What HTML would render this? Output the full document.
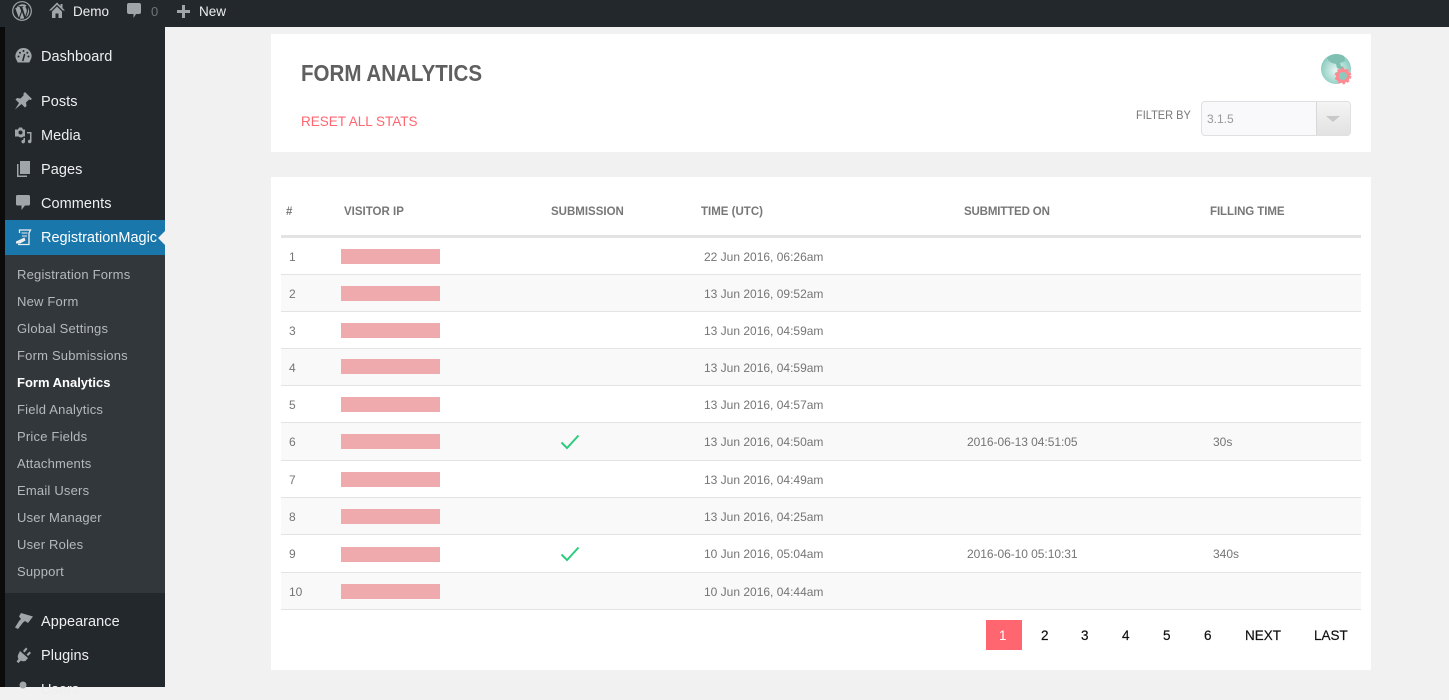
<!DOCTYPE html>
<html><head><meta charset="utf-8"><style>
*{box-sizing:border-box}
html,body{margin:0;padding:0;width:1449px;height:687px;overflow:hidden;background:#f1f1f1;font-family:"Liberation Sans",sans-serif}
.a{position:absolute;white-space:nowrap}
#strip{left:0;top:0;width:5px;height:687px;background:#0b0b0b}
#bar{left:0;top:0;width:1449px;height:27px;background:#23282d}
#side{left:5px;top:27px;width:160px;height:660px;background:#23282d}
#sub{left:5px;top:255px;width:160px;height:338px;background:#32373c}
#act{left:5px;top:220px;width:160px;height:35px;background:#1a77ab}
.m{left:41px;font-size:14.5px;line-height:20px;color:#eee;letter-spacing:.05px}
.s{left:17px;font-size:13px;line-height:18px;color:#b4b9be;letter-spacing:.2px}
.card{background:#fff}
.line{left:281px;width:1080px;height:1px;background:#e3e3e3}
.alt{left:281px;width:1080px;background:#f9f9fa}
.red{left:341px;width:99px;height:15px;background:#eeaaac}
.th{font-size:11.5px;font-weight:bold;color:#777;line-height:14px;top:205px}
.td{font-size:12px;color:#757575;line-height:14px}
.pg{font-size:13.5px;color:#111;line-height:16px;top:627px;margin-top:1px;-webkit-text-stroke:.2px #111}
svg{position:absolute;overflow:visible}
</style></head><body>
<div class="a" id="strip"></div>
<div class="a" id="bar"></div>
<div class="a" id="side"></div>
<div class="a" id="sub"></div>
<div class="a" id="act"></div>
<svg style="left:12px;top:1px" width="20" height="20" viewBox="0 0 20 20"><circle cx="10" cy="10" r="9.3" fill="none" stroke="#a0a5aa" stroke-width="1.200"/><path d="M3.200 7l3.600 9.800L9.200 10 7.600 6H6.400V5.200h5V6h-1.100l3 9.400 1.400-4.900c.5-1.800-.5-3-1-3.800-.4-.8-.2-2 .9-2.200-3-2.200-8-1.500-10.400 2.700zM10 11l-2.200 6.500a7.500 7.500 0 0 0 4.500-.1zM16 6.500c.6 2.700-.3 5-1.900 9.700 3-2 4-6.200 1.900-9.700z" fill="#a0a5aa"/></svg>
<svg style="left:49px;top:2px" width="16" height="16" viewBox="0 0 16 16"><path d="M8 .5L0 8.500h2.200l5.800-5.800 5.800 5.800H16L13.500 6V2h-2v2z" fill="#a0a5aa"/><path d="M3 9.500L8 4.500l5 5V16H9.500v-4.500h-3V16H3z" fill="#a0a5aa"/></svg>
<div class="a" style="left:73px;top:3px;font-size:13.500px;line-height:17px;color:#eee">Demo</div>
<svg style="left:127px;top:3px" width="15" height="16" viewBox="0 0 15 16"><path d="M2 0h10a2 2 0 0 1 2 2v7a2 2 0 0 1-2 2H9l-2.500 4v-4H2a2 2 0 0 1-2-2V2a2 2 0 0 1 2-2z" fill="#a0a5aa"/></svg>
<div class="a" style="left:151px;top:3px;font-size:13px;line-height:17px;color:#70757a">0</div>
<svg style="left:177px;top:5px" width="13" height="13" viewBox="0 0 13 13"><path d="M5 0h3v5h5v3H8v5H5V8H0V5h5z" fill="#a0a5aa"/></svg>
<div class="a" style="left:199px;top:3px;font-size:13.500px;line-height:17px;color:#eee">New</div>

<svg style="left:15px;top:48px" width="17" height="16" viewBox="0 0 17 16"><path d="M8.500 0a8 8 0 0 0-7 12l1.200 2.500h11.600l1.200-2.500a8 8 0 0 0-7-12z" fill="#a0a5aa"/><path d="M7.700 13l2-7" stroke="#23282d" stroke-width="1.500" fill="none"/><circle cx="3.500" cy="8.500" r="1" fill="#23282d"/><circle cx="5" cy="4.700" r="1" fill="#23282d"/><circle cx="8.500" cy="3" r="1" fill="#23282d"/><circle cx="12.300" cy="4.700" r="1" fill="#23282d"/><circle cx="13.500" cy="8.500" r="1" fill="#23282d"/></svg>
<div class="a m" style="top:46px;margin-top:1px">Dashboard</div>
<svg style="left:14px;top:92px" width="18" height="18" viewBox="0 0 18 18"><path d="M11 0l7 7-1.500 1-1.500-.5-3 3 .5 3.500-1.500 1.500-3.500-3.500L1 17.500l4-6.500-3.500-3.500L3 6l3.500.5 3-3L9.500 1.500z" fill="#a0a5aa"/></svg>
<div class="a m" style="top:92px">Posts</div>
<svg style="left:14px;top:127px" width="18" height="17" viewBox="0 0 18 17"><path d="M1 2.500h3l1-2h3l1 2h2v7H9.500a3.500 3.500 0 0 1-5 0H1z" fill="#a0a5aa"/><circle cx="6.500" cy="5.500" r="2" fill="#23282d"/><path d="M13 5h4.500v9.500a1.800 1.800 0 1 1-1.500-1.800V6.500h-3zM9.500 11h1.500v3.500a1.800 1.800 0 1 1-1.500-1.700z" fill="#a0a5aa"/></svg>
<div class="a m" style="top:126px">Media</div>
<svg style="left:16px;top:161px" width="14" height="16" viewBox="0 0 14 16"><path d="M4 0h10v13H4z" fill="#a0a5aa"/><path d="M2.500 3v11.500H11V16H1V3z" fill="#a0a5aa"/></svg>
<div class="a m" style="top:160px">Pages</div>
<svg style="left:16px;top:195px" width="14" height="16" viewBox="0 0 14 16"><path d="M1.500 0h11A1.500 1.500 0 0 1 14 1.500V9a1.500 1.500 0 0 1-1.500 1.500H9L5.500 15v-4.500h-4A1.500 1.500 0 0 1 0 9V1.500A1.500 1.500 0 0 1 1.500 0z" fill="#a0a5aa"/></svg>
<div class="a m" style="top:194px">Comments</div>
<svg style="left:15px;top:229px" width="17" height="17" viewBox="0 0 17 17"><path d="M4.500 4V1h11l-1.500 3v11.500H3" fill="none" stroke="#eee" stroke-width="1.300"/><path d="M6.500 4h6M7 7h5" stroke="#eee" stroke-width="1"/><path d="M1 12.500l8.500-4 1 3L5 14.500H1z" fill="#eee"/></svg>
<div class="a m" style="top:228px;color:#fff;letter-spacing:0">RegistrationMagic</div>
<div class="a" style="left:158px;top:231px;width:0;height:0;border:7px solid transparent;border-left:0;border-right-color:#f1f1f1"></div>

<div class="a s" style="top:266px">Registration Forms</div>
<div class="a s" style="top:293px">New Form</div>
<div class="a s" style="top:320px">Global Settings</div>
<div class="a s" style="top:347px">Form Submissions</div>
<div class="a s" style="top:374px;color:#fff;font-weight:bold;letter-spacing:0">Form Analytics</div>
<div class="a s" style="top:401px">Field Analytics</div>
<div class="a s" style="top:428px">Price Fields</div>
<div class="a s" style="top:455px">Attachments</div>
<div class="a s" style="top:482px">Email Users</div>
<div class="a s" style="top:509px">User Manager</div>
<div class="a s" style="top:536px">User Roles</div>
<div class="a s" style="top:563px">Support</div>

<svg style="left:14px;top:612px" width="19" height="18" viewBox="0 0 19 18"><path d="M7 1l12 3.500-5 6.500-3-2-2 1.500-5 6.500-3-1.500L5 9 7 7 5 4.500z" fill="#a0a5aa"/></svg>
<div class="a m" style="top:612px">Appearance</div>
<svg style="left:15px;top:646px" width="17" height="18" viewBox="0 0 17 18"><path d="M5 5l8 7-2 2.500c-1.500 1-3.500 1-5 0L3.500 17 1.500 15.500 3.500 13c-1-1.500-1-3.500 0-5zM8 5l3-3.500 1.500 1.500-3 3.500zM11.500 8.500l3-3 1.500 1.500-3 3z" fill="#a0a5aa"/></svg>
<div class="a m" style="top:646px">Plugins</div>
<svg style="left:17px;top:681px" width="12" height="12" viewBox="0 0 12 12"><circle cx="6" cy="4" r="3.500" fill="#a0a5aa"/></svg>
<div class="a m" style="top:680px">Users</div>

<div class="a card" style="left:271px;top:34px;width:1100px;height:118px"></div>
<div class="a" style="left:301px;top:59px;font-size:23px;line-height:28px;font-weight:bold;color:#5f5f5f;transform:scaleX(.893);transform-origin:0 0">FORM ANALYTICS</div>
<div class="a" style="left:301px;top:113px;font-size:13.500px;line-height:18px;color:#ff6670">RESET ALL STATS</div>
<svg style="left:1320px;top:53px" width="33" height="33" viewBox="0 0 33 33"><defs><radialGradient id="g" cx=".5" cy=".55" r=".55"><stop offset="0" stop-color="#eaf7f4"/><stop offset="1" stop-color="#86cabd"/></radialGradient></defs><circle cx="16" cy="16" r="15" fill="url(#g)"/><path d="M7 5c4-4 12-5 17-2l1 5-5 2 1 3 3 1-2 3-5-2-1-4-4-1-3-2z" fill="#7fbfb2"/><path d="M16 19l3 1 1 5-3 4-1-4z" fill="#8fcabe"/><circle cx="23" cy="23" r="5.500" fill="#8cc9bd" stroke="#ff8a92" stroke-width="3"/><circle cx="23" cy="23" r="7.600" fill="none" stroke="#ff8a92" stroke-width="1.500" stroke-dasharray="2.500 2.400"/></svg>
<div class="a" style="left:1136px;top:108px;font-size:12px;line-height:14px;color:#777;transform:scaleX(.917);transform-origin:0 0">FILTER BY</div>
<div class="a" style="left:1201px;top:101px;width:150px;height:35px;background:#f9f9fb;border:1px solid #e0e0e0;border-radius:4px"></div>
<div class="a" style="left:1316px;top:102px;width:34px;height:33px;background:linear-gradient(#f4f4f4,#e2e2e2);border-left:1px solid #d8d8d8;border-radius:0 3px 3px 0"></div>
<div class="a" style="left:1326px;top:116px;width:0;height:0;border:7px solid transparent;border-bottom:0;border-top:6px solid #c8c8c8"></div>
<div class="a" style="left:1207px;top:112px;font-size:12px;line-height:14px;color:#999">3.1.5</div>

<div class="a card" style="left:271px;top:177px;width:1100px;height:493px"></div>
<div class="a th" style="left:286px">#</div>
<div class="a th" style="left:344px">VISITOR IP</div>
<div class="a th" style="left:551px">SUBMISSION</div>
<div class="a th" style="left:701px">TIME (UTC)</div>
<div class="a th" style="left:964px;letter-spacing:-.15px">SUBMITTED ON</div>
<div class="a th" style="left:1210px;letter-spacing:-.08px">FILLING TIME</div>
<div class="a" style="left:281px;top:235px;width:1080px;height:3px;background:#e3e3e3"></div>

<div class="a alt" style="top:275px;height:36px"></div>
<div class="a alt" style="top:349px;height:36px"></div>
<div class="a alt" style="top:423px;height:37px"></div>
<div class="a alt" style="top:498px;height:36px"></div>
<div class="a alt" style="top:573px;height:36px"></div>
<div class="a line" style="top:274px"></div>
<div class="a line" style="top:311px"></div>
<div class="a line" style="top:348px"></div>
<div class="a line" style="top:385px"></div>
<div class="a line" style="top:422px"></div>
<div class="a line" style="top:460px"></div>
<div class="a line" style="top:497px"></div>
<div class="a line" style="top:534px"></div>
<div class="a line" style="top:572px"></div>
<div class="a line" style="top:609px"></div>

<div class="a red" style="top:249px"></div>
<div class="a red" style="top:286px"></div>
<div class="a red" style="top:323px"></div>
<div class="a red" style="top:359px"></div>
<div class="a red" style="top:397px"></div>
<div class="a red" style="top:434px"></div>
<div class="a red" style="top:472px"></div>
<div class="a red" style="top:509px"></div>
<div class="a red" style="top:547px"></div>
<div class="a red" style="top:584px"></div>

<div class="a td" style="left:289px;top:250px">1</div><div class="a td" style="left:704px;top:250px">22 Jun 2016, 06:26am</div>
<div class="a td" style="left:289px;top:287px">2</div><div class="a td" style="left:704px;top:287px">13 Jun 2016, 09:52am</div>
<div class="a td" style="left:289px;top:324px">3</div><div class="a td" style="left:704px;top:324px">13 Jun 2016, 04:59am</div>
<div class="a td" style="left:289px;top:361px">4</div><div class="a td" style="left:704px;top:361px">13 Jun 2016, 04:59am</div>
<div class="a td" style="left:289px;top:398px">5</div><div class="a td" style="left:704px;top:398px">13 Jun 2016, 04:57am</div>
<div class="a td" style="left:289px;top:435px">6</div><div class="a td" style="left:704px;top:435px">13 Jun 2016, 04:50am</div>
<div class="a td" style="left:967px;top:435px;letter-spacing:-.05px">2016-06-13 04:51:05</div><div class="a td" style="left:1213px;top:435px">30s</div>
<div class="a td" style="left:289px;top:473px">7</div><div class="a td" style="left:704px;top:473px">13 Jun 2016, 04:49am</div>
<div class="a td" style="left:289px;top:510px">8</div><div class="a td" style="left:704px;top:510px">13 Jun 2016, 04:25am</div>
<div class="a td" style="left:289px;top:547px">9</div><div class="a td" style="left:704px;top:547px">10 Jun 2016, 05:04am</div>
<div class="a td" style="left:967px;top:547px;letter-spacing:-.05px">2016-06-10 05:10:31</div><div class="a td" style="left:1213px;top:547px">340s</div>
<div class="a td" style="left:289px;top:585px">10</div><div class="a td" style="left:704px;top:585px">10 Jun 2016, 04:44am</div>

<svg style="left:560px;top:434px" width="20" height="16" viewBox="0 0 20 16"><path d="M1.500 8.500l5.500 5.500L18.500 1.500" fill="none" stroke="#2ecc80" stroke-width="2"/></svg>
<svg style="left:560px;top:546px" width="20" height="16" viewBox="0 0 20 16"><path d="M1.500 8.500l5.500 5.500L18.500 1.500" fill="none" stroke="#2ecc80" stroke-width="2"/></svg>

<div class="a" style="left:986px;top:620px;width:36px;height:30px;background:#ff6670"></div>
<div class="a pg" style="left:999px;color:#fff;-webkit-text-stroke:0">1</div>
<div class="a pg" style="left:1041px">2</div>
<div class="a pg" style="left:1081px">3</div>
<div class="a pg" style="left:1122px">4</div>
<div class="a pg" style="left:1163px">5</div>
<div class="a pg" style="left:1204px">6</div>
<div class="a pg" style="left:1245px">NEXT</div>
<div class="a pg" style="left:1314px">LAST</div>
</body></html>
